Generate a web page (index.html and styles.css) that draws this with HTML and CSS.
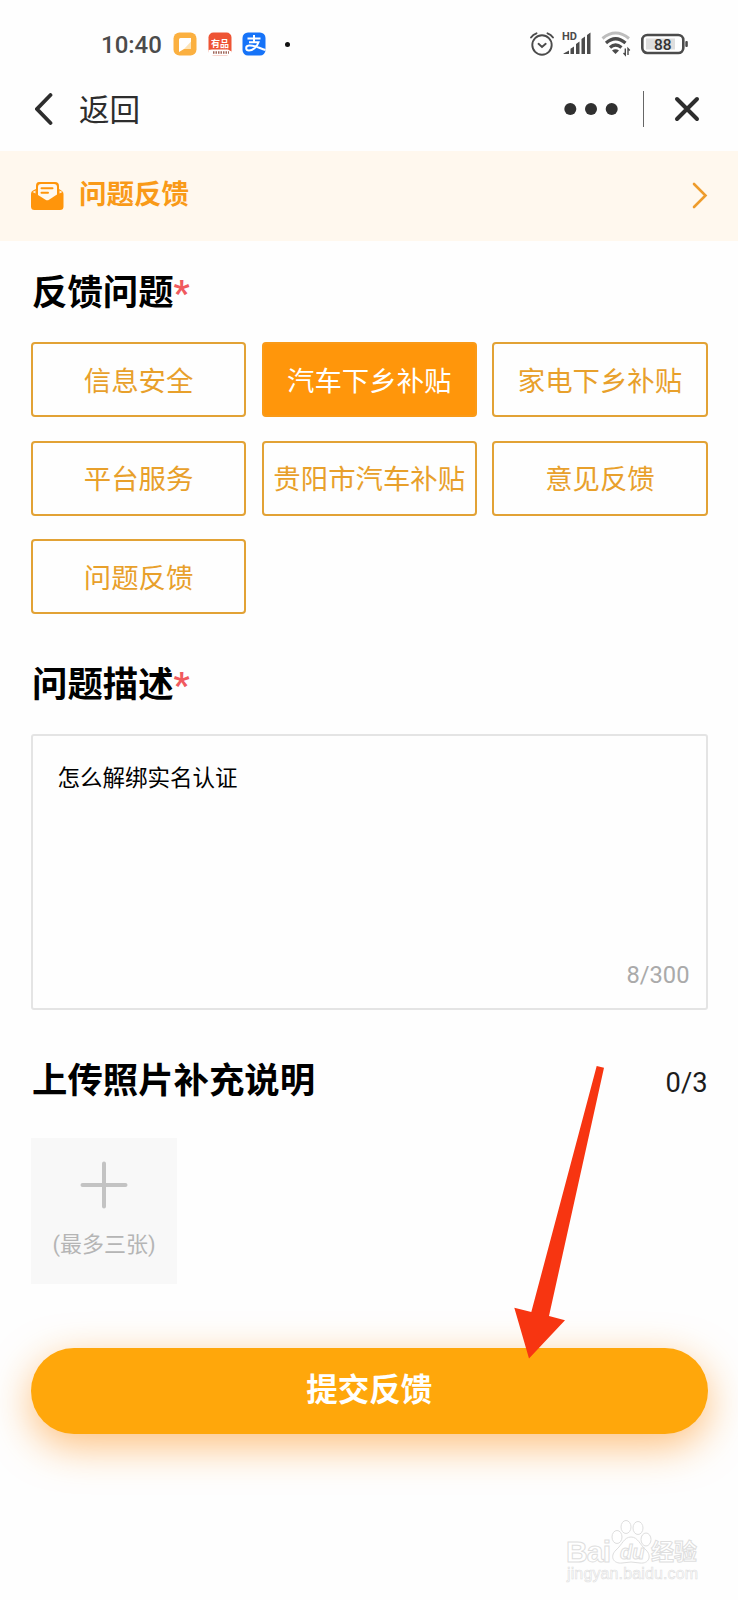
FILE: index.html
```html
<!DOCTYPE html>
<html lang="zh-CN">
<head>
<meta charset="utf-8">
<title>问题反馈</title>
<link rel="stylesheet" href="styles.css">
</head>
<body>
<div class="screen">
  <div class="status">
    <span class="time">10:40</span>
    <div class="apps">
      <svg width="24" height="24" viewBox="0 0 24 24"><rect x=".5" y=".5" width="23" height="23" rx="6" fill="#fbb040"/><path d="M6 7.500Q6 6 7.500 6H18V15.500Q18 17 16.500 17H11L6 20Z" fill="#fff"/><path d="M11 17L18 9.500V15.500Q18 17 16.500 17Z" fill="#fde3b5"/></svg>
      <svg width="24" height="24" viewBox="0 0 24 24"><rect x=".5" y=".5" width="23" height="23" rx="5" fill="#ee5434"/><path d="M.5 18L4 17.500H20L23.500 19.500V23.500H.5Z" fill="#fff"/><text x="12" y="14.500" text-anchor="middle" class="app-red">有品</text><path d="M5 20.500H21" stroke="#a0685c" stroke-width="2.500" stroke-dasharray="1.500 1"/></svg>
      <svg width="24" height="24" viewBox="0 0 24 24"><rect x=".5" y=".5" width="23" height="23" rx="5.500" fill="#1673f8"/><path d="M5.500 6.500H18.500M12 3V10M7 10.200H16.500C15 15 10.500 18.500 7 18.500C3.500 18.500 3 14 7 13.500C12 13 17 16 23.500 18" fill="none" stroke="#fff" stroke-width="2"/></svg>
    </div>
    <span class="dot"></span>
    <div class="signals">
      <svg width="26" height="26" viewBox="0 0 26 26" fill="none" stroke="#4b4b4b" stroke-width="1.900" stroke-linecap="round"><circle cx="13" cy="14" r="9.700"/><path d="M9.500 12.800L13 16L16.700 12.800M2 6.500Q4 3.500 7.500 2.300M24 6.500Q22 3.500 18.500 2.300"/></svg>
      <svg width="30" height="26" viewBox="0 0 30 26" fill="#4b4b4b"><text x="0" y="8.700" class="hd">HD</text><path d="M1.500 22.500L7 19.500V23H1.500ZM8.500 17.800L12 15.500V23H8.500ZM14 13L17.500 10.500V23H14ZM19.500 8L23 5.500V23H19.500ZM25 4L28.500 1.500V23H25Z"/></svg>
      <svg width="30" height="26" viewBox="0 0 30 26" fill="none"><path d="M1.500 7.500Q14.500 -3.500 28 7.500" stroke="#bdbdbd" stroke-width="3"/><path d="M5 12Q14.500 3.500 24.500 12M9 16.500Q14.500 11.500 20.500 16.500" stroke="#4b4b4b" stroke-width="3.200"/><path d="M11 19.500Q14.500 17 18 19.500L14.500 23Z" fill="#4b4b4b"/><path d="M24.300 17.500V24L22.500 22M27 24V17.500L28.800 19.500" stroke="#4b4b4b" stroke-width="1.400"/></svg>
      <svg width="47" height="26" viewBox="0 0 47 26"><rect x="1.300" y="4" width="41" height="18" rx="5" fill="#fff" stroke="#4b4b4b" stroke-width="2.600"/><rect x="5" y="7.500" width="29" height="11" fill="#dedede"/><rect x="44.300" y="10" width="2.500" height="6" rx="1" fill="#4b4b4b"/><text x="21.800" y="18.500" text-anchor="middle" class="batt">88</text></svg>
    </div>
  </div>
  <div class="nav">
    <svg width="18" height="32" viewBox="0 0 18 32"><path d="M15.500 2L2 16L15.500 30" fill="none" stroke="#2d2d2d" stroke-width="3.800" stroke-linecap="round"/></svg>
    <span class="back">返回</span>
    <svg class="more" width="54" height="14" viewBox="0 0 54 14" fill="#303030"><circle cx="6.300" cy="7" r="6"/><circle cx="27" cy="7" r="6"/><circle cx="47.700" cy="7" r="6"/></svg>
    <span class="divider"></span>
    <svg width="26" height="26" viewBox="0 0 26 26"><path d="M3 3L23 23M23 3L3 23" stroke="#2d2d2d" stroke-width="4" stroke-linecap="round"/></svg>
  </div>
  <div class="banner">
    <svg width="33" height="30" viewBox="0 0 33 30"><path d="M3 9L5 8V5Q5 1 8 1H24Q28 1 28 5V8L31 10Q32.500 11 32.500 13V25.500Q32.500 29 29 29H3.500Q0 29 0 25.500V13Q0 10 3 9Z" fill="#ff950b"/><path d="M7 6Q7 3 10 3H23Q26 3 26 6V13.500L18 18.800Q16.300 19.800 14.500 18.800L7 14Z" fill="#fff8ee"/><path d="M10.500 7.200H21.500M10.500 11.800H17" stroke="#ff950b" stroke-width="2" stroke-linecap="round"/><path d="M1.500 11L4.500 9.500V12.500ZM31.500 11L28.500 9.500V12.500Z" fill="#fff1db"/></svg>
    <span class="banner-text">问题反馈</span>
    <svg class="arrow" width="16" height="28" viewBox="0 0 16 28"><path d="M2 2L13.500 13.500L2 25" fill="none" stroke="#ee9c2c" stroke-width="2.600" stroke-linecap="round"/></svg>
  </div>
  <main class="form">
    <h2 class="title">反馈问题<span class="req">*</span></h2>
    <div class="options">
      <div class="option">信息安全</div>
      <div class="option selected">汽车下乡补贴</div>
      <div class="option">家电下乡补贴</div>
      <div class="option">平台服务</div>
      <div class="option">贵阳市汽车补贴</div>
      <div class="option">意见反馈</div>
      <div class="option">问题反馈</div>
    </div>
    <h2 class="title title-desc">问题描述<span class="req">*</span></h2>
    <div class="textbox"><span>怎么解绑实名认证</span><span class="count">8/300</span></div>
    <div class="upload-head"><h2 class="title">上传照片补充说明</h2><span class="total">0/3</span></div>
    <div class="upload">
      <svg width="48" height="48" viewBox="0 0 48 48"><path d="M24 2.500V45.500M2.500 24H45.500" stroke="#c3c3c3" stroke-width="4" stroke-linecap="round"/></svg>
      <span>(最多三张)</span>
    </div>
    <div class="submit">提交反馈</div>
  </main>
  <svg class="pointer" width="92" height="294" viewBox="0 0 92 294"><path d="M83.700 1L91 2.800L36 251L52 255.300L16 293.500L1.300 242.700L18.300 247Z" fill="#f73511"/></svg>
  <svg class="watermark" width="140" height="92" viewBox="0 0 140 92" fill="#fff" stroke="#dedede" stroke-width="1">
    <text x="1" y="42.500" class="wm-logo" textLength="45">Bai</text>
    <path d="M66 18C59 18 57 26 51 31C44 38 49 45 57 44Q66 42 75 44C84 45 87 37 81 31C75 26 73 18 66 18Z"/>
    <ellipse cx="52" cy="18" rx="5" ry="6.500"/><ellipse cx="61" cy="8" rx="5" ry="6.500"/><ellipse cx="73" cy="9" rx="5" ry="6.500"/><ellipse cx="81" cy="20.500" rx="5" ry="6.500"/>
    <text x="55" y="40" class="wm-du">du</text>
    <text x="86" y="41" class="wm-cn">经验</text>
    <text x="2" y="60" class="wm-url" textLength="131">jingyan.baidu.com</text>
  </svg>
</div>
</body>
</html>
```
FILE: styles.css
```css
* { box-sizing: border-box; }
body { margin: 0; background: #fefefe; font-family: Roboto, "Noto Sans CJK SC", sans-serif; color: #000; }
svg { display: block; flex: none; }
.screen { position: relative; width: 738px; height: 1600px; overflow: hidden; }
.status { height: 66px; padding: 22px 50px 0 101px; display: flex; align-items: center; }
.time { width: 72px; padding-top: 1px; font-size: 24px; line-height: 44px; font-weight: 500; color: #4b4b4b; }
.apps { display: flex; gap: 10.5px; }
.app-red { font: 700 9px "Noto Sans CJK SC", sans-serif; fill: #fff; }
.dot { width: 5px; height: 5px; border-radius: 50%; background: #111; margin-left: 19px; }
.signals { display: flex; margin-left: auto; }
.signals svg + svg { margin-left: 7px; }
.signals svg:nth-child(3) { margin-left: 9px; }
.signals svg:nth-child(4) { margin-left: 10px; }
.hd { font: 700 11px Roboto, sans-serif; }
.batt { font: 500 15.5px Roboto, sans-serif; fill: #333; }
.nav { height: 84.5px; padding: 2px 38px 0 35px; display: flex; align-items: center; }
.back { margin: 4px 0 0 26px; font-size: 30.6px; line-height: 44px; color: #2d2d2d; }
.more { margin-left: auto; }
.divider { width: 1px; height: 36px; background: #666; margin: 0 30px 0 25px; }
.banner { height: 90px; padding: 0 30px 0 31px; display: flex; align-items: center; background: #fff8ee; }
.banner-text { margin: -2px 0 0 15px; font-size: 27.5px; line-height: 40px; font-weight: 700; color: #f99a18; }
.arrow { margin-left: auto; }
.form { padding: 26px 30.5px 0 31px; }
.title { margin: 0; padding-left: 1px; font-size: 35.4px; line-height: 52px; height: 52px; font-weight: 700; }
.req { color: #f05a5e; font-weight: 700; }
.options { margin-top: 23.5px; display: grid; grid-template-columns: repeat(3, 1fr); grid-auto-rows: 75px; gap: 23.7px 15.6px; }
.option { border: 2px solid #e2a235; border-radius: 4px; padding-bottom: 2px; display: flex; align-items: center; justify-content: center; font-size: 27.4px; white-space: nowrap; color: #e8a02b; }
.option.selected { background: #ff960b; border-color: #f99a18; color: #fff; }
.title-desc { margin-top: 44.5px; }
.textbox { margin-top: 23.5px; height: 276px; border: 2px solid #e4e4e4; border-radius: 3px; padding: 25px 16px 16px 24.5px; font-size: 22.5px; line-height: 34px; display: flex; flex-direction: column; justify-content: space-between; }
.count { align-self: flex-end; font-size: 23.7px; color: #aaa; }
.upload-head { margin-top: 45px; display: flex; justify-content: space-between; align-items: center; }
.total { padding-top: 3px; font-size: 27.3px; color: #1c1c1c; }
.upload { margin-top: 31px; width: 146px; height: 146px; padding-top: 23px; background: #f8f8f8; display: flex; flex-direction: column; align-items: center; font-size: 22px; line-height: 32px; color: #b5b5b5; }
.upload span { margin-top: 20px; }
.submit { margin-top: 63.5px; height: 86.5px; border-radius: 44px; background: #ffa70b; color: #fff; font-size: 31.5px; font-weight: 700; line-height: 85px; text-align: center; box-shadow: 0 12px 40px rgba(255, 142, 20, .55); }
.pointer { position: absolute; left: 513px; top: 1065px; }
.watermark { position: absolute; left: 565px; top: 1519px; }
.wm-logo { font: 700 30px "Liberation Sans", sans-serif; }
.wm-du { font: italic 700 20px "Liberation Sans", sans-serif; }
.wm-cn { font: 700 23px "Noto Sans CJK SC", sans-serif; }
.wm-url { font: 400 16px "Liberation Sans", sans-serif; stroke-width: .6; }
```
